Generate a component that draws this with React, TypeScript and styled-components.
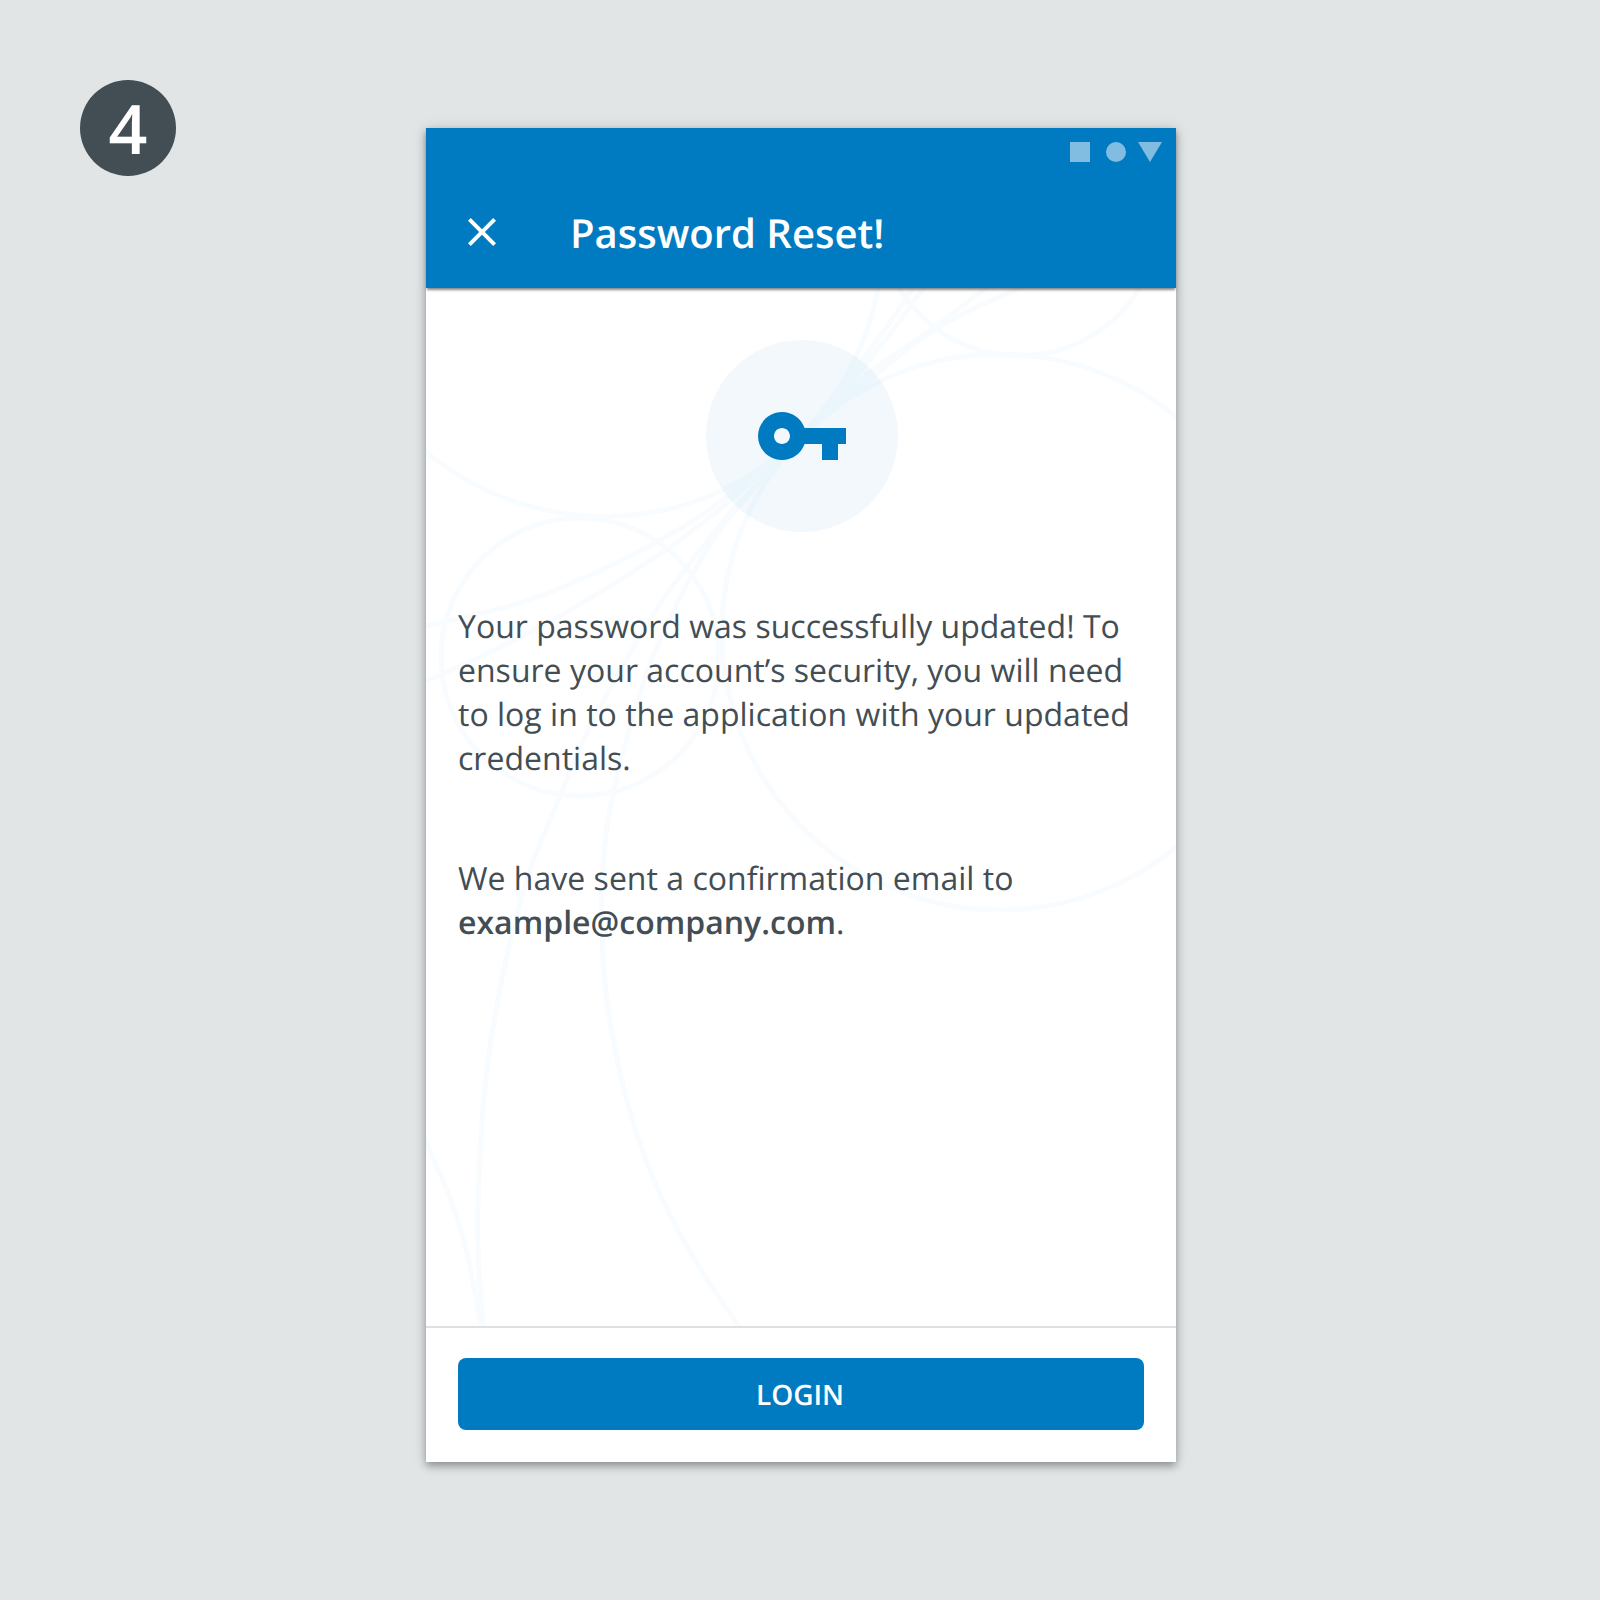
import React from "react";
import styled, { createGlobalStyle } from "styled-components";

const blue = "#007bc1";
const slate = "#424e54";

const GlobalStyle = createGlobalStyle`
  body {
    margin: 0;
    background: #e1e5e6;
    font-family: "Open Sans", "Noto Sans", sans-serif;
    color: ${slate};
    text-rendering: geometricPrecision;
    -webkit-font-smoothing: antialiased;
  }
  *, *::before, *::after { box-sizing: border-box; }
`;

const Stage = styled.main`
  width: 1600px;
  height: 1600px;
  display: grid;
  grid-template-columns: 346px 750px;
  align-items: start;
  padding: 80px 0 0 80px;
  overflow: hidden;
  background: #e1e5e6;
`;

const StepBadge = styled.div`
  width: 96px;
  height: 96px;
  border-radius: 50%;
  background: ${slate};
  color: #fff;
  display: flex;
  align-items: center;
  justify-content: center;
  font-size: 68px;
  font-weight: 600;
  line-height: 96px;
`;

const Phone = styled.section`
  margin-top: 48px;
  width: 750px;
  height: 1334px;
  display: flex;
  flex-direction: column;
  background: #fff;
  box-shadow: 0 4px 8px rgba(0, 0, 0, 0.34), 0 0 16px rgba(0, 0, 0, 0.09);
`;

const Header = styled.header`
  position: relative;
  z-index: 2;
  flex: 0 0 160px;
  background: ${blue};
  color: #fff;
  box-shadow: 0 3px 2px -1px rgba(0, 0, 0, 0.4), 0 2px 5px -1px rgba(0, 0, 0, 0.14);
`;

const StatusBar = styled.div`
  height: 48px;
  padding: 14px 14px 0 0;
  display: flex;
  justify-content: flex-end;
`;

const TitleBar = styled.div`
  height: 112px;
  padding: 32px 32px 0;
  display: flex;
  align-items: flex-start;
`;

const CloseButton = styled.button`
  width: 48px;
  height: 48px;
  padding: 0;
  border: 0;
  background: none;
  color: inherit;
`;

const Title = styled.h1`
  margin: 0 0 0 64px;
  font-size: 40px;
  font-weight: 600;
  line-height: 50px;
`;

const Body = styled.div`
  position: relative;
  flex: 1;
  padding: 52px 32px 0;
  display: flex;
  flex-direction: column;
  overflow: hidden;
`;

const LineArt = styled.svg`
  position: absolute;
  inset: 0;
`;

const KeyCircle = styled.div`
  position: relative;
  width: 192px;
  height: 192px;
  margin: 0 0 73px 248px;
  border-radius: 50%;
  background: rgba(0, 123, 193, 0.05);
  display: flex;
  align-items: center;
  justify-content: center;
  color: ${blue};
`;

const Paragraph = styled.p`
  position: relative;
  margin: 0 0 76px;
  font-size: 32px;
  line-height: 44px;
  letter-spacing: 0.015px;
  font-variant-ligatures: common-ligatures;
`;

const Email = styled.strong`
  font-weight: 600;
`;

const Footer = styled.footer`
  flex: 0 0 136px;
  padding: 30px 32px 32px;
  border-top: 2px solid #e0e0e0;
  background: #fff;
`;

const LoginButton = styled.button`
  display: block;
  width: 100%;
  height: 72px;
  padding: 2px 2px 0 0;
  border: 0;
  border-radius: 8px;
  background: ${blue};
  color: #fff;
  text-rendering: inherit;
  font: 600 28px/70px "Open Sans", "Noto Sans", sans-serif;
`;

type Point = [number, number];

/* Catmull-Rom spline through the points, as cubic Bezier segments. */
function spline(points: Point[]): string {
  let d = `M${points[0].join(" ")}`;
  for (let i = 0; i < points.length - 1; i++) {
    const a = points[Math.max(i - 1, 0)];
    const b = points[i];
    const c = points[i + 1];
    const e = points[Math.min(i + 2, points.length - 1)];
    d += `C${b[0] + (c[0] - a[0]) / 6} ${b[1] + (c[1] - a[1]) / 6} ${c[0] - (e[0] - b[0]) / 6} ${c[1] - (e[1] - b[1]) / 6} ${c[0]} ${c[1]}`;
  }
  return d;
}

const strands: Point[][] = [
  [[410, 629], [426, 626], [520, 603], [586, 577], [653, 544], [713, 507], [802, 435], [890, 363], [933, 331], [973, 309], [1013, 291], [1040, 278]],
  [[410, 687], [426, 681], [480, 657], [553, 620], [620, 580], [680, 540], [727, 503], [802, 435], [863, 378], [937, 325], [982, 291], [1000, 279]],
  [[485, 1340], [483, 1325], [479, 1270], [478, 1206], [485, 1086], [502, 979], [527, 879], [556, 806], [587, 733], [627, 658], [667, 594], [727, 517], [802, 435], [857, 367], [888, 325], [911, 290], [920, 276]],
  [[750, 1340], [738, 1325], [693, 1257], [656, 1185], [628, 1105], [609, 1015], [602, 938], [603, 868], [612, 800], [640, 693], [670, 618], [720, 530], [802, 435], [850, 383], [877, 350], [900, 321], [923, 288], [931, 276]],
  [[415, 1120], [426, 1143], [450, 1198], [467, 1254], [481, 1325], [483, 1340]],
];

const BackgroundLines = () => (
  <LineArt width="750" height="1038" viewBox="426 288 750 1038" aria-hidden="true">
    <g fill="none" stroke="#f8fcff" strokeWidth="5">
      <circle cx="1000" cy="632" r="278" />
      <circle cx="604.5" cy="238.5" r="278" />
      <circle cx="580" cy="657" r="139" />
      <circle cx="1019.5" cy="216" r="140" />
      {strands.map((points, i) => (
        <path key={i} d={spline(points)} />
      ))}
    </g>
  </LineArt>
);

const StatusIcons = () => (
  <svg width="92" height="20" viewBox="0 0 92 20" fill="#fff" fillOpacity="0.5" aria-hidden="true">
    <rect width="20" height="20" />
    <circle cx="46" cy="10" r="10" />
    <path d="M68 0h24L80 20z" />
  </svg>
);

const CloseIcon = () => (
  <svg width="48" height="48" viewBox="0 0 24 24" fill="currentColor" display="block">
    <path d="M19 6.41 17.59 5 12 10.59 6.41 5 5 6.41 10.59 12 5 17.59 6.41 19 12 13.41 17.59 19 19 17.59 13.41 12z" />
  </svg>
);

const KeyIcon = () => (
  <svg width="96" height="96" viewBox="0 0 24 24" fill="currentColor">
    <path d="M12.65 10C11.83 7.67 9.61 6 7 6c-3.31 0-6 2.69-6 6s2.69 6 6 6c2.61 0 4.83-1.67 5.65-4H17v4h4v-4h2v-4H12.65zM7 14c-1.1 0-2-.9-2-2s.9-2 2-2 2 .9 2 2-.9 2-2 2z" />
  </svg>
);

export default function App() {
  return (
    <>
      <GlobalStyle />
      <Stage>
        <StepBadge>4</StepBadge>
        <Phone>
          <Header>
            <StatusBar>
              <StatusIcons />
            </StatusBar>
            <TitleBar>
              <CloseButton aria-label="Close">
                <CloseIcon />
              </CloseButton>
              <Title>Password Reset!</Title>
            </TitleBar>
          </Header>
          <Body>
            <BackgroundLines />
            <KeyCircle>
              <KeyIcon />
            </KeyCircle>
            <Paragraph>
              Your password was successfully updated! To ensure your account’s security, you will need to log in to
              the application with your updated credentials.
            </Paragraph>
            <Paragraph>
              We have sent a confirmation email to <Email>example@company.com</Email>.
            </Paragraph>
          </Body>
          <Footer>
            <LoginButton>LOGIN</LoginButton>
          </Footer>
        </Phone>
      </Stage>
    </>
  );
}
